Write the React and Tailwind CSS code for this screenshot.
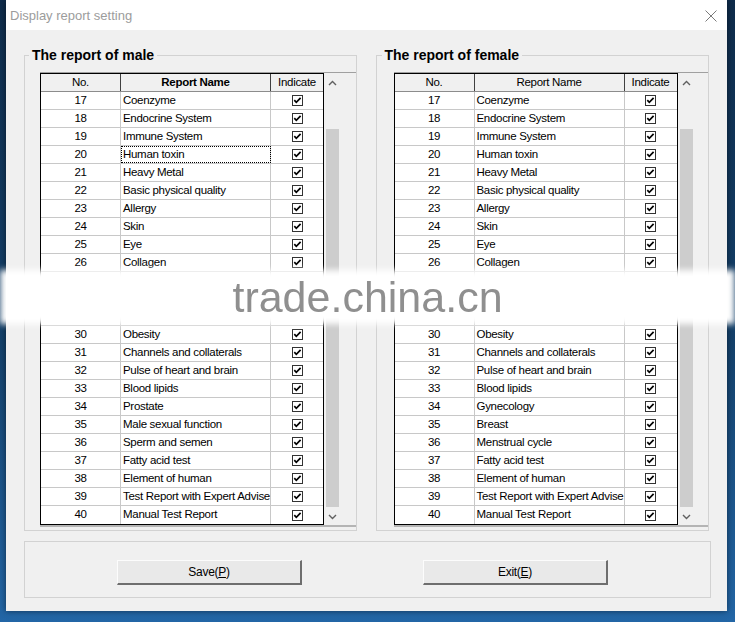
import React from "react";

const maleRows = [
  [17, "Coenzyme"],
  [18, "Endocrine System"],
  [19, "Immune System"],
  [20, "Human toxin"],
  [21, "Heavy Metal"],
  [22, "Basic physical quality"],
  [23, "Allergy"],
  [24, "Skin"],
  [25, "Eye"],
  [26, "Collagen"],
  [27, ""],
  [28, ""],
  [29, ""],
  [30, "Obesity"],
  [31, "Channels and collaterals"],
  [32, "Pulse of heart and brain"],
  [33, "Blood lipids"],
  [34, "Prostate"],
  [35, "Male sexual function"],
  [36, "Sperm and semen"],
  [37, "Fatty acid test"],
  [38, "Element of human"],
  [39, "Test Report with Expert Advise"],
  [40, "Manual Test Report"],
];

const femaleRows = maleRows.map(([no, name]) => {
  if (no === 34) return [no, "Gynecology"];
  if (no === 35) return [no, "Breast"];
  if (no === 36) return [no, "Menstrual cycle"];
  return [no, name];
});

// rows 27-29 sit under the watermark band in the screenshot
const hidden = (no) => no >= 27 && no <= 29;

const Check = () => (
  <svg width="11" height="11" viewBox="0 0 11 11">
    <rect x="0.5" y="0.5" width="10" height="10" fill="#fff" stroke="#333" />
    <path d="M2.3 5.2 L4.3 7.3 L8.6 2.9" fill="none" stroke="#000" strokeWidth="1.7" />
  </svg>
);

const Chevron = ({ up }) => (
  <svg width="9" height="6" viewBox="0 0 9 6">
    <path
      d={up ? "M1 5 L4.5 1.5 L8 5" : "M1 1 L4.5 4.5 L8 1"}
      fill="none"
      stroke="#606060"
      strokeWidth="1.4"
    />
  </svg>
);

// grid control + scrollbar, like the old flex grid
const ReportGrid = ({ rows, boldHeader, focusNo }) => (
  <div className="flex border-t border-[#a0a0a0] shadow-[0_2px_0_#b4b4b4]">
    <div className="w-[284px] border border-black bg-white">
      <div className="flex h-[18px] bg-[#f0f0f0] border-b border-[#8c8c8c] text-[11.5px] tracking-[-0.3px] leading-[17px]">
        <div className="w-[80px] text-center border-r border-[#404040]">No.</div>
        <div className={`w-[150px] text-center border-r border-[#404040] ${boldHeader ? "font-bold" : ""}`}>
          Report Name
        </div>
        <div className="w-[52px] text-center">Indicate</div>
      </div>
      {rows.map(([no, name]) => (
        <div key={no} className="flex h-[18px] border-b border-[#c8c8c8] last:border-b-0 text-[11.5px] tracking-[-0.3px] leading-[17px]">
          <div className="w-[80px] text-center border-r border-[#c8c8c8]">{hidden(no) ? "" : no}</div>
          <div
            className={`w-[150px] pl-[2px] whitespace-nowrap overflow-hidden border-r border-[#c8c8c8] ${
              no === focusNo ? "outline-1 outline-dotted outline-black outline-offset-[-1px]" : ""
            }`}
          >
            {name}
          </div>
          <div className="w-[52px] flex items-center justify-center">
            {hidden(no) ? null : <Check />}
          </div>
        </div>
      ))}
    </div>
    <div className="w-[17px] flex flex-col items-center bg-[#f0f0f0]">
      <div className="h-[20px] flex items-center justify-center">
        <Chevron up />
      </div>
      <div className="flex-1 w-full px-[2px] pb-[2px] flex flex-col justify-end">
        <div className="h-[378px] bg-[#cdcdcd]" />
      </div>
      <div className="h-[16px] flex items-center justify-center">
        <Chevron />
      </div>
    </div>
  </div>
);

const ReportGroup = ({ title, rows, boldHeader, focusNo, width, padLeft, legendShift }) => (
  <fieldset className={`${width} h-[485px] border border-[#d2d2d2] ${padLeft}`}>
    <legend className={`${legendShift} px-[3px] text-[14px] font-bold leading-[18px] text-black`}>{title}</legend>
    <div className="pt-[8px]">
      <ReportGrid rows={rows} boldHeader={boldHeader} focusNo={focusNo} />
    </div>
  </fieldset>
);

const Button = ({ label, hot }) => (
  <button className="w-[185px] h-[25px] bg-[#e9e9e9] border-t border-l border-[#fcfcfc] border-r-2 border-b-2 border-r-[#6e6e6e] border-b-[#6e6e6e] text-[12px] tracking-[-0.3px] text-black">
    {label}(<span className="underline">{hot}</span>)
  </button>
);

export default function App() {
  return (
    <div className="relative w-[735px] h-[622px] overflow-hidden bg-[linear-gradient(180deg,#0f2c4b_0%,#14416b_55%,#2366a6_100%)] font-['Liberation_Sans',Arial,sans-serif]">
      <div className="ml-[6px] w-[721px] h-[611px] bg-[#f0f0f0] flex flex-col shadow-[0_0_6px_rgba(0,0,0,0.5)]">
        <div className="h-[30px] bg-white flex items-center justify-between pl-[4px] pr-[10px] pt-[1px]">
          <span className="text-[13px] text-[#9c9c9c]">Display report setting</span>
          <svg width="12" height="12" viewBox="0 0 12 12">
            <path d="M0.5 0.5 L11.5 11.5 M11.5 0.5 L0.5 11.5" stroke="#7a7a7a" strokeWidth="1" />
          </svg>
        </div>
        <div className="flex-1 px-[18px] pt-[16px]">
          <div className="flex gap-[19px]">
            <ReportGroup
              title="The report of male"
              rows={maleRows}
              boldHeader
              focusNo={20}
              width="w-[333px]"
              padLeft="pl-[15px]"
              legendShift="-ml-[11px]"
            />
            <ReportGroup
              title="The report of female"
              rows={femaleRows}
              width="w-[334px]"
              padLeft="pl-[17px]"
              legendShift="-ml-[12px]"
            />
          </div>
          <div className="mt-[10px] w-[687px] h-[57px] border border-[#d2d2d2] flex items-start gap-[121px] pl-[92px] pt-[18px]">
            <Button label="Save" hot="P" />
            <Button label="Exit" hot="E" />
          </div>
        </div>
      </div>

      {/* watermark band over rows 27-29 */}
      <div className="absolute left-0 top-[270px] w-[735px] h-[54px] bg-white blur-[3px]" />
      <div className="absolute left-0 top-[276px] w-[735px] text-center text-[43px] leading-[43px] text-[#8f8f8f] blur-[0.4px]">
        trade.china.cn
      </div>
    </div>
  );
}
